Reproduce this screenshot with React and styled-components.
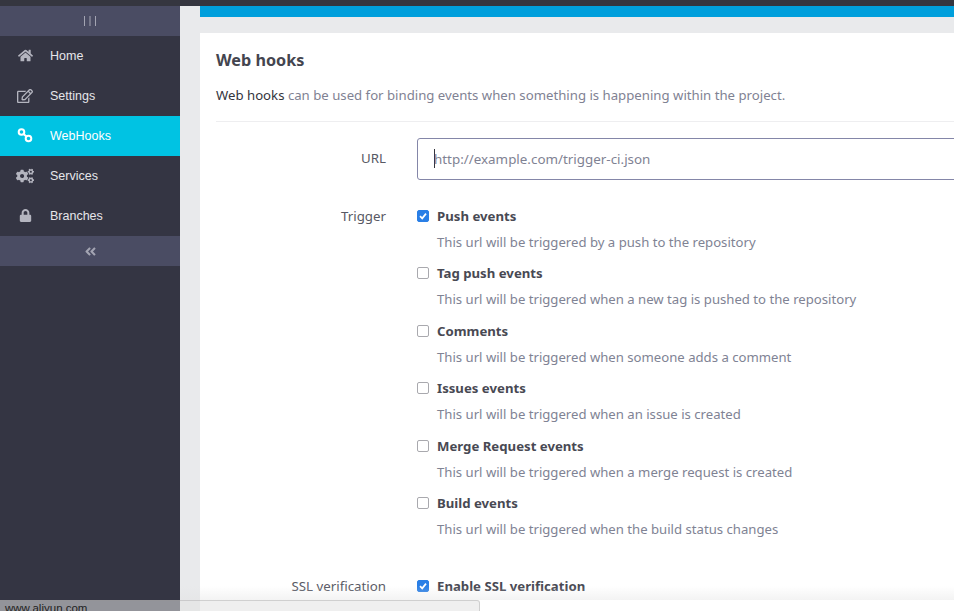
import React from 'react';
import styled, { createGlobalStyle } from 'styled-components';
import { FaHome, FaRegEdit, FaCogs, FaLock, FaAngleDoubleLeft } from 'react-icons/fa';

const GlobalStyle = createGlobalStyle`
  html, body {
    margin: 0;
    height: 100%;
    overflow: hidden;
    background: #e9eaec;
  }
`;

const Page = styled.div`
  width: 954px;
  height: 611px;
  overflow: hidden;
  display: flex;
  flex-direction: column;
  position: relative;
  font-family: "Noto Sans", sans-serif;
`;

const TopBar = styled.div`
  height: 6px;
  flex: none;
  background: #35363f;
`;

const Body = styled.div`
  flex: 1;
  display: flex;
  min-height: 0;
`;

const Sidebar = styled.aside`
  width: 180px;
  flex: none;
  background: #343543;
  font-family: "Liberation Sans", sans-serif;
`;

const SideToggle = styled.div`
  height: 30px;
  background: #4a4c63;
  color: #a3a4b2;
  display: flex;
  align-items: center;
  justify-content: center;
  font-size: 13px;
`;

const NavItem = styled.div`
  height: 40px;
  box-sizing: border-box;
  padding-bottom: 1px;
  display: flex;
  align-items: center;
  font-size: 12.5px;
  color: ${(p) => (p.$active ? '#fff' : '#e6e6ea')};
  background: ${(p) => (p.$active ? '#00c3e3' : 'transparent')};
`;

const NavIcon = styled.span`
  width: 50px;
  flex: none;
  display: flex;
  justify-content: center;
  color: ${(p) => (p.$active ? '#fff' : '#b4b5bf')};
  font-size: ${(p) => p.$size || 16}px;
`;

const Main = styled.main`
  flex: 1;
  min-width: 0;
  padding-left: 20px;
`;

const BlueBar = styled.div`
  height: 11px;
  background: #009fdc;
`;

const Card = styled.section`
  margin-top: 16px;
  background: #fff;
  padding: 16px 16px 0;
  height: 600px;
  box-sizing: border-box;
  width: 800px;
`;

const Title = styled.h3`
  margin: 0;
  font-size: 16.2px;
  line-height: 22px;
  font-weight: 700;
  color: #44454f;
`;

const Intro = styled.p`
  margin: 14px 0 0;
  padding-bottom: 16px;
  border-bottom: 1px solid #eeeef0;
  font-size: 13.2px;
  line-height: 20px;
  color: #7f8293;

  strong {
    font-weight: 400;
    color: #33343c;
  }
`;

const FormRow = styled.div`
  display: grid;
  grid-template-columns: 170px 1fr;
  column-gap: 31px;
  margin-top: ${(p) => p.$top}px;
`;

const Label = styled.div`
  text-align: right;
  font-size: 13.3px;
  line-height: 20px;
  color: #585964;
  padding-top: ${(p) => p.$pad || 0}px;
`;

const UrlBox = styled.div`
  height: 42px;
  box-sizing: border-box;
  border: 1px solid #8486a8;
  border-radius: 3px;
  padding: 0 0 1px 16px;
  display: flex;
  align-items: center;
  font-size: 13.4px;
  color: #7f8293;
`;

const Caret = styled.span`
  width: 1px;
  height: 19px;
  background: #33343c;
  margin-right: -1px;
`;

const Option = styled.div`
  height: 57.5px;
`;

const OptionHead = styled.label`
  display: flex;
  align-items: center;
  height: 20px;
  font-size: 13.2px;
  font-weight: 700;
  color: #484953;
`;

const Box = styled.span`
  width: 12px;
  height: 12px;
  box-sizing: border-box;
  border-radius: 2px;
  margin-right: 8px;
  flex: none;
  display: flex;
  align-items: center;
  justify-content: center;
  background: ${(p) => (p.$on ? '#2a7fe6' : '#fff')};
  border: 1px solid ${(p) => (p.$on ? '#2a7fe6' : '#a9a9ae')};
`;

const Hint = styled.div`
  margin-top: 6px;
  padding-left: 20px;
  font-size: 13.15px;
  line-height: 20px;
  color: #808394;
`;

const StatusBubble = styled.div`
  position: absolute;
  left: 0;
  bottom: 0;
  width: 480px;
  height: 11px;
  box-sizing: border-box;
  padding-left: 5px;
  background: rgba(225, 225, 225, 0.55);
  border: 1px solid rgba(150, 150, 150, 0.35);
  border-bottom: none;
  border-left: none;
  border-radius: 0 3px 0 0;
  font-family: "Liberation Sans", sans-serif;
  font-size: 11.5px;
  line-height: 14px;
  color: #222;
  overflow: hidden;
`;

const Fade = styled.div`
  position: absolute;
  left: 180px;
  right: 0;
  bottom: 11px;
  height: 14px;
  background: linear-gradient(rgba(225, 225, 225, 0), rgba(225, 225, 225, 0.4));
`;

const HookIcon = () => (
  <svg width="16" height="15" viewBox="0 0 16 15" fill="none" stroke="currentColor" strokeWidth="2">
    <circle cx="4.5" cy="4" r="2.8" />
    <circle cx="11.5" cy="10.5" r="2.8" />
    <path d="M6.5 6 L9.5 8.6" />
  </svg>
);

const BarsIcon = () => (
  <svg width="12" height="10" viewBox="0 0 12 10" stroke="currentColor" strokeWidth="1">
    <path d="M0.5 0 V10 M6 0 V10 M11.5 0 V10" />
  </svg>
);

const Check = () => (
  <svg width="10" height="10" viewBox="0 0 10 10" fill="none" stroke="#fff" strokeWidth="1.7">
    <path d="M2 5.2 L4.2 7.4 L8 2.6" />
  </svg>
);

const navItems = [
  { label: 'Home', icon: <FaHome />, size: 15 },
  { label: 'Settings', icon: <FaRegEdit />, size: 16 },
  { label: 'WebHooks', icon: <HookIcon />, active: true },
  { label: 'Services', icon: <FaCogs />, size: 18 },
  { label: 'Branches', icon: <FaLock />, size: 13 },
];

const triggers = [
  { name: 'Push events', hint: 'This url will be triggered by a push to the repository', on: true },
  { name: 'Tag push events', hint: 'This url will be triggered when a new tag is pushed to the repository' },
  { name: 'Comments', hint: 'This url will be triggered when someone adds a comment' },
  { name: 'Issues events', hint: 'This url will be triggered when an issue is created' },
  { name: 'Merge Request events', hint: 'This url will be triggered when a merge request is created' },
  { name: 'Build events', hint: 'This url will be triggered when the build status changes' },
];

const App = () => (
  <Page>
    <GlobalStyle />
    <TopBar />
    <Body>
      <Sidebar>
        <SideToggle><BarsIcon /></SideToggle>
        {navItems.map((item) => (
          <NavItem key={item.label} $active={item.active}>
            <NavIcon $active={item.active} $size={item.size}>{item.icon}</NavIcon>
            {item.label}
          </NavItem>
        ))}
        <SideToggle><FaAngleDoubleLeft /></SideToggle>
      </Sidebar>
      <Main>
        <BlueBar />
        <Card>
          <Title>Web hooks</Title>
          <Intro><strong>Web hooks</strong> can be used for binding events when something is happening within the project.</Intro>
          <FormRow $top={16}>
            <Label $pad={10}>URL</Label>
            <UrlBox><Caret />http://example.com/trigger-ci.json</UrlBox>
          </FormRow>
          <FormRow $top={25.5}>
            <Label>Trigger</Label>
            <div>
              {triggers.map((t) => (
                <Option key={t.name}>
                  <OptionHead><Box $on={t.on}>{t.on && <Check />}</Box>{t.name}</OptionHead>
                  <Hint>{t.hint}</Hint>
                </Option>
              ))}
            </div>
          </FormRow>
          <FormRow $top={25}>
            <Label>SSL verification</Label>
            <OptionHead><Box $on><Check /></Box>Enable SSL verification</OptionHead>
          </FormRow>
        </Card>
      </Main>
    </Body>
    <Fade />
    <StatusBubble>www.aliyun.com</StatusBubble>
  </Page>
);

export default App;
